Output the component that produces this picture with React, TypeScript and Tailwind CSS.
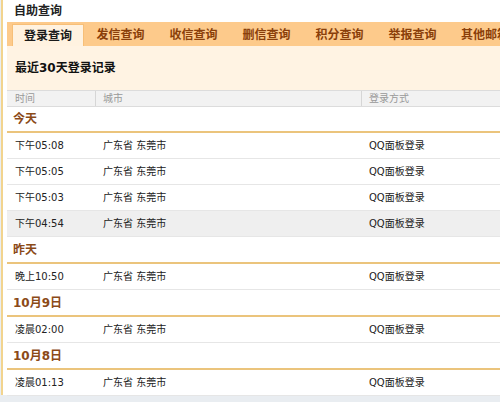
import React from "react";

type Row = { time: string; city: string; way: string; hl?: boolean };
type Group = { day: string; rows: Row[] };

const groups: Group[] = [
    {
        day: "今天",
        rows: [
            { time: "下午05:08", city: "广东省 东莞市", way: "QQ面板登录" },
            { time: "下午05:05", city: "广东省 东莞市", way: "QQ面板登录" },
            { time: "下午05:03", city: "广东省 东莞市", way: "QQ面板登录" },
            { time: "下午04:54", city: "广东省 东莞市", way: "QQ面板登录", hl: true },
        ],
    },
    { day: "昨天", rows: [{ time: "晚上10:50", city: "广东省 东莞市", way: "QQ面板登录" }] },
    { day: "10月9日", rows: [{ time: "凌晨02:00", city: "广东省 东莞市", way: "QQ面板登录" }] },
    { day: "10月8日", rows: [{ time: "凌晨01:13", city: "广东省 东莞市", way: "QQ面板登录" }] },
];

const tabs = ["登录查询", "发信查询", "收信查询", "删信查询", "积分查询", "举报查询", "其他邮箱查询"];

const font = { fontFamily: '"DejaVu Sans", "Noto Sans CJK SC", sans-serif' };

export default function App() {
    return (
        <div className="w-[500px] h-[402px] overflow-hidden bg-[#e9edf1]" style={font}>
            <div className="ml-[1px] h-[395px] border-l-2 border-[#f2d48e] bg-white pl-[4px] w-[560px]">
                <div className="h-[22px] pl-[7px] pt-[3px] text-[12px] font-bold text-[#222] leading-[16px]">
                    自助查询
                </div>

                {/* tabs */}
                <div className="h-[24px] bg-[#fdca8b] flex items-end pl-[5px]">
                    {tabs.map((t, i) =>
                        i === 0 ? (
                            <div
                                key={t}
                                className="w-[72px] h-[22px] shrink-0 bg-[#fff2e0] border-t border-l border-r border-[#f7bf78] flex items-center justify-center text-[12px] font-bold text-[#1a1a1a] whitespace-nowrap"
                            >
                                {t}
                            </div>
                        ) : (
                            <div
                                key={t}
                                className={`${i === tabs.length - 1 ? "w-[96px]" : "w-[73px]"} h-[22px] flex items-center justify-center text-[12px] font-bold text-[#8a3f0a] whitespace-nowrap shrink-0`}
                            >
                                {t}
                            </div>
                        )
                    )}
                </div>

                <div className="h-[44px] bg-[#fff3e3] flex items-center pl-[8px] text-[12px] font-bold text-[#111]">
                    最近30天登录记录
                </div>

                {/* header */}
                <div className="h-[17px] bg-[#f2f2f2] border-t border-b border-[#dcdcdc] grid grid-cols-[89px_266px_1fr] text-[10px] text-[#999] leading-[15px]">
                    <div className="pl-[8px] border-r border-[#d6d6d6]">时间</div>
                    <div className="pl-[7px] border-r border-[#d6d6d6]">城市</div>
                    <div className="pl-[7px]">登录方式</div>
                </div>

                {groups.map((g, gi) => (
                    <div key={g.day}>
                        <div
                            className={`${gi === 0 ? "h-[26px]" : "h-[27px]"} border-b-2 border-[#ebc47c] flex items-center pl-[6px] text-[12px] font-bold text-[#8b4a18]`}
                        >
                            {g.day}
                        </div>
                        {g.rows.map((r, i) => (
                            <div
                                key={i}
                                className={`h-[26px] border-b border-[#e6e6e6] grid grid-cols-[89px_266px_1fr] items-center text-[10px] text-[#222] ${r.hl ? "bg-[#efefef]" : ""}`}
                            >
                                <div className="pl-[8px]">{r.time}</div>
                                <div className="pl-[7px]">{r.city}</div>
                                <div className="pl-[7px]">{r.way}</div>
                            </div>
                        ))}
                    </div>
                ))}
            </div>
        </div>
    );
}
